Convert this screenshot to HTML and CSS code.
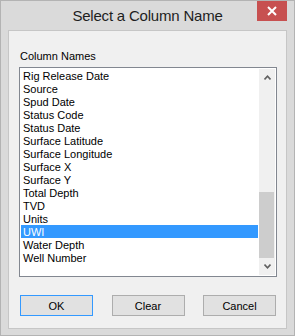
FILE: index.html
```html
<!DOCTYPE html>
<html lang="en">
<head>
    <meta charset="UTF-8">
    <title>Select a Column Name</title>
    <link rel="stylesheet" href="styles.css">
</head>
<body>
    <div class="dialog" role="dialog" aria-label="Select a Column Name">
        <div class="titlebar">
            <span class="title">Select a Column Name</span>
            <button class="close-btn" aria-label="Close">
                <svg width="10" height="10" viewBox="0 0 10 10" aria-hidden="true">
                    <path d="M1 1 L9 9 M9 1 L1 9" stroke="#ffffff" stroke-width="2"/>
                </svg>
            </button>
        </div>

        <div class="client">
            <div class="field-label">Column Names</div>

            <div class="listbox" role="listbox">
                <ul class="items">
                    <li>Rig Release Date</li>
                    <li>Source</li>
                    <li>Spud Date</li>
                    <li>Status Code</li>
                    <li>Status Date</li>
                    <li>Surface Latitude</li>
                    <li>Surface Longitude</li>
                    <li>Surface X</li>
                    <li>Surface Y</li>
                    <li>Total Depth</li>
                    <li>TVD</li>
                    <li>Units</li>
                    <li class="selected" aria-selected="true">UWI</li>
                    <li>Water Depth</li>
                    <li>Well Number</li>
                </ul>
                <div class="scrollbar">
                    <div class="arrow">
                        <svg width="7" height="5" viewBox="0 0 7 5"><polyline points="0.5,4.5 3.5,1.2 6.5,4.5" fill="none" stroke="#606060" stroke-width="1.6"/></svg>
                    </div>
                    <div class="track">
                        <div class="thumb"></div>
                    </div>
                    <div class="arrow">
                        <svg width="7" height="5" viewBox="0 0 7 5"><polyline points="0.5,0.5 3.5,3.8 6.5,0.5" fill="none" stroke="#606060" stroke-width="1.6"/></svg>
                    </div>
                </div>
            </div>

            <div class="buttons">
                <button class="btn default">OK</button>
                <button class="btn">Clear</button>
                <button class="btn">Cancel</button>
            </div>
        </div>
    </div>
</body>
</html>
```

FILE: styles.css
```css
body {
    margin: 0;
    font-family: "Liberation Sans", Arial, sans-serif;
    font-size: 11px;
    color: #000000;
}

.dialog {
    width: 295px;
    height: 336px;
    box-sizing: border-box;
    border: 1px solid #b3b3b3;
    background: #dadada;
    padding: 0 7px 6px;
    display: flex;
    flex-direction: column;
}

.titlebar {
    position: relative;
    height: 29px;
    flex-shrink: 0;
    text-align: center;
}

.title {
    font-size: 15px;
    line-height: 30px;
    color: #1e1e1e;
    letter-spacing: -0.2px;
}

.close-btn {
    position: absolute;
    top: 0;
    right: 0;
    width: 30px;
    height: 20px;
    border: none;
    padding: 0;
    background: #c75050;
    display: flex;
    align-items: center;
    justify-content: center;
}

.client {
    flex: 1;
    box-sizing: border-box;
    border: 1px solid #c6c6c6;
    background: #f0f0f0;
    padding: 19px 9px 0 10px;
}

.field-label {
    line-height: 13px;
    padding-left: 1px;
    margin-bottom: 4px;
}

.listbox {
    height: 210px;
    box-sizing: border-box;
    border: 1px solid #828790;
    background: #ffffff;
    padding: 1px;
    display: flex;
}

.items {
    list-style: none;
    margin: 0;
    padding: 0;
    flex: 1;
}

.items li {
    height: 13px;
    line-height: 14px;
    padding-left: 2px;
    white-space: nowrap;
}

.items li.selected {
    background: #3399ff;
    color: #ffffff;
}

.scrollbar {
    width: 16px;
    margin-left: 1px;
    background: #f0f0f0;
    display: flex;
    flex-direction: column;
}

.arrow {
    height: 17px;
    display: flex;
    align-items: center;
    justify-content: center;
}

.track {
    flex: 1;
    display: flex;
    flex-direction: column;
    justify-content: flex-end;
}

.thumb {
    height: 66px;
    margin: 0 1px 0 0;
    background: #cdcdcd;
}

.buttons {
    display: flex;
    justify-content: space-between;
    margin-top: 18px;
    padding: 0 1px;
}

.btn {
    width: 73px;
    height: 21px;
    box-sizing: border-box;
    border: 1px solid #adadad;
    background: #e1e1e1;
    font-family: "Liberation Sans", Arial, sans-serif;
    font-size: 11px;
    color: #000000;
    padding: 0;
}

.btn.default {
    border-color: #3399ff;
}
```
